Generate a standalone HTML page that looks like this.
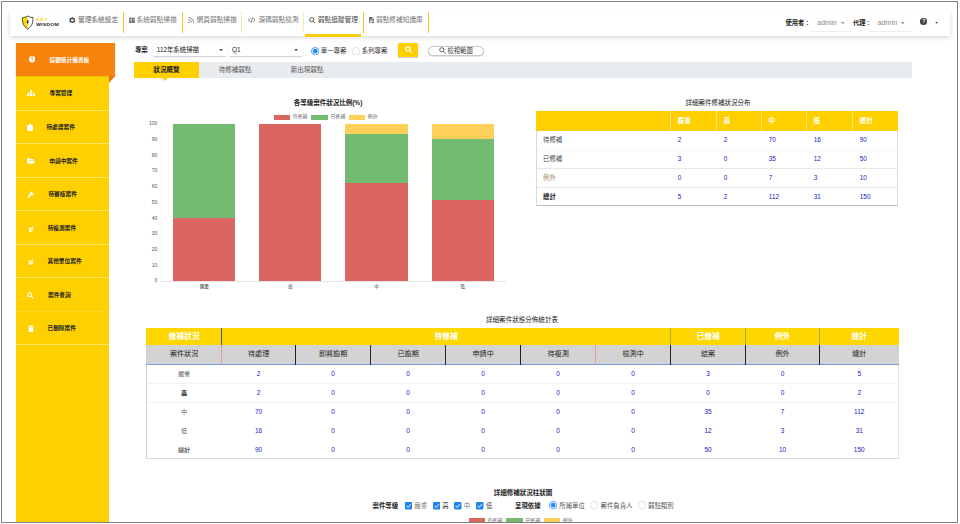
<!DOCTYPE html>
<html lang="zh-Hant">
<head>
<meta charset="utf-8">
<title>弱點追蹤管理</title>
<style>
*{box-sizing:border-box;margin:0;padding:0}
html,body{width:960px;height:524px;overflow:hidden;background:#fff}
body{font-family:"Liberation Sans","Noto Sans CJK TC",sans-serif;color:#222;position:relative}
.a{position:absolute}
.t{position:absolute;white-space:nowrap;line-height:1}
.b{font-weight:bold}
.c{text-align:center}
/* outer frame */
#clip{left:0;top:0;width:958px;height:522.5px;overflow:hidden}
#frame{left:1px;top:1px;width:957px;height:522px;border:1px solid #7f7f7f;pointer-events:none}
/* navbar */
#nav{left:10px;top:9px;width:940px;height:26.800px;background:#fff;box-shadow:0 1.500px 5px rgba(0,0,0,.16)}
.sep{position:absolute;top:3px;width:1px;height:21px;background:#f6c915}
.ni{position:absolute;top:8.200px;font-size:6.700px;line-height:1;color:#777;white-space:nowrap}
.ni svg{position:absolute;top:0}
/* sidebar */
#side{left:16px;top:43px;width:93.2px;height:480px;background:#ffd000}
#sact{left:16px;top:43px;width:99.3px;height:33px;background:#f6830b;box-shadow:0 .5px 1.500px rgba(0,0,0,.2)}
.si{position:absolute;left:0;width:93.2px;height:33.5px;border-top:1px solid rgba(255,255,255,.38)}
.si .t{left:33px;top:14.600px;font-size:5.7px;font-weight:bold;color:#222}
.sel{background:#fff;border-radius:1.500px;box-shadow:0 .5px 1.200px rgba(0,0,0,.2)}
.rad{width:8.200px;height:8.200px;border-radius:50%;border:.6px solid #d2d2d2;background:#fff}
.rad.on{border:.9px solid #2b8dff}
.rad.on::after{content:"";position:absolute;left:.9px;top:.9px;width:4.600px;height:4.600px;border-radius:50%;background:#1a8cff}
</style>
</head>
<body>
<div id="clip" class="a">

<!-- ============ NAVBAR ============ -->
<div id="nav" class="a">
  <!-- logo: shield (coords relative to nav: page x-10, y-9) -->
  <svg class="a" style="left:10.800px;top:5.500px" width="13.400" height="15" viewBox="0 0 26 30">
    <path d="M13 2 C9 4.500 5 5 2.500 5 C2 15 4.500 23 13 28 C21.500 23 24 15 23.500 5 C21 5 17 4.500 13 2 Z" fill="#fff"/>
    <path d="M13 2 C9 4.500 5 5 2.500 5 C2 15 4.500 23 13 28 Z" fill="#ffd900"/>
    <path d="M13 2 C9 4.500 5 5 2.500 5 C2 15 4.500 23 13 28 C21.500 23 24 15 23.500 5 C21 5 17 4.500 13 2 Z" fill="none" stroke="#333" stroke-width="1.700" stroke-linejoin="round"/>
    <rect x="11.400" y="10.500" width="3.200" height="6.500" rx="1.600" fill="#222"/>
  </svg>
  <div class="t b" style="left:26.200px;top:8.800px;font-size:4.200px;letter-spacing:.5px;color:#ffd21a;transform:scaleX(1.2);transform-origin:0 0">KEY</div>
  <div class="t b" style="left:26.200px;top:13.600px;font-size:4.200px;letter-spacing:.2px;color:#222;transform:scaleX(1.22);transform-origin:0 0">WISDOM</div>

  <!-- item 1 -->
  <svg class="a" style="left:58.800px;top:7.700px" width="6.600" height="6.600" viewBox="0 0 16 16"><path fill="#3c3c3c" fill-rule="evenodd" d="M5.73 0.33L10.27 0.33L10.00 2.77L11.53 3.65L13.51 2.20L15.78 6.13L13.53 7.12L13.53 8.88L15.78 9.87L13.51 13.80L11.53 12.35L10.00 13.23L10.27 15.67L5.73 15.67L6.00 13.23L4.47 12.35L2.49 13.80L0.22 9.87L2.47 8.88L2.47 7.12L0.22 6.13L2.49 2.20L4.47 3.65L6.00 2.77ZM8 4.900a3.100 3.100 0 1 0 .01 0z"/></svg>
  <div class="ni" style="left:68px;color:#666">管理系統設定</div>
  <div class="sep" style="left:113px"></div>
  <!-- item 2 -->
  <svg class="a" style="left:119px;top:8px" width="5.800" height="6" viewBox="0 0 12 12"><path fill="#6a6a6a" fill-rule="evenodd" d="M0 2.200L5 0v12H0zM6 1.200h6V12H6zM1.200 4v1.500h2.300V4zM1.200 7v1.500h2.300V7zM7.500 3.300v1.500h1.200V3.300zM9.800 3.300v1.500H11V3.300zM7.500 6.300v1.500h1.200V6.300zM9.800 6.300v1.500H11V6.300z"/></svg>
  <div class="ni" style="left:126.500px">系統弱點掃描</div>
  <div class="sep" style="left:172px"></div>
  <!-- item 3 -->
  <svg class="a" style="left:177.900px;top:8px" width="6.200" height="6.200" viewBox="0 0 12 12" fill="none" stroke="#777" stroke-width="1.700"><circle cx="1.900" cy="10.100" r="1.500" fill="#777" stroke="none"/><path d="M.8 5.200A6 6 0 0 1 6.800 11.200M.8 1A10.200 10.200 0 0 1 11 11.200"/></svg>
  <div class="ni" style="left:186.600px">網頁弱點掃描</div>
  <div class="sep" style="left:231px;background:#fdeaa8"></div>
  <!-- item 4 -->
  <svg class="a" style="left:237.500px;top:8px" width="7.600" height="6" viewBox="0 0 15 12" fill="none" stroke="#5a5a5a" stroke-width="1.500"><path d="M4.500 2.200L1 6L4.500 9.800M10.500 2.200L14 6L10.500 9.800M8.900 .6L6.100 11.400"/></svg>
  <div class="ni" style="left:248.500px">源碼弱點檢測</div>
  <div class="sep" style="left:293px;background:#fdeaa8"></div>
  <!-- item 5 (active) -->
  <svg class="a" style="left:298.900px;top:7.700px" width="6.800" height="6.800" viewBox="0 0 14 14" fill="none" stroke="#3a3a3a" stroke-width="1.700"><circle cx="5.600" cy="5.600" r="4.400"/><path d="M8.900 8.900L13.300 13.300"/></svg>
  <div class="ni" style="left:307.800px;color:#4a4a4a">弱點追蹤管理</div>
  <div class="a" style="left:294.800px;top:25px;width:56.200px;height:2.700px;background:#fccd08"></div>
  <div class="sep" style="left:353px"></div>
  <!-- item 6 -->
  <svg class="a" style="left:359px;top:8px" width="5.200" height="6.200" viewBox="0 0 10 12"><path fill="#6a6a6a" fill-rule="evenodd" d="M0 0h6.500L10 3.500V12H0zM6 1v3h3zM1.500 5.500v1.200h7V5.500zM1.500 7.800V9h7V7.800zM1.500 10v1h5v-1z"/></svg>
  <div class="ni" style="left:366px">弱點修補知識庫</div>
  <div class="sep" style="left:418px"></div>

  <!-- right side -->
  <div class="t b" style="left:775.500px;top:10.500px;font-size:6.300px;color:#222">使用者 :</div>
  <div class="t" style="left:807px;top:10.200px;font-size:7.300px;color:#8a8a8a">admin</div>
  <svg class="a" style="left:830.60px;top:12.55px" width="3.80" height="2.10" viewBox="0 0 10 6"><path d="M0 0H10L5 6z" fill="#8a8a8a"/></svg>
  <div class="a" style="left:800px;top:22px;width:42px;height:.5px;background:#eee"></div>
  <div class="t b" style="left:843px;top:10.500px;font-size:6.300px;color:#222">代理 :</div>
  <div class="t" style="left:867.500px;top:10.200px;font-size:7.300px;color:#8a8a8a">admin</div>
  <svg class="a" style="left:891.30px;top:12.55px" width="3.80" height="2.10" viewBox="0 0 10 6"><path d="M0 0H10L5 6z" fill="#8a8a8a"/></svg>
  <div class="a" style="left:861px;top:22px;width:42px;height:.5px;background:#eee"></div>
  <div class="a" style="left:910.200px;top:9.400px;width:6.600px;height:6.600px;border-radius:50%;background:#444"></div>
  <div class="t b" style="left:912.200px;top:10.300px;font-size:5px;color:#fff">?</div>
  <svg class="a" style="left:924.60px;top:12.95px" width="3.20" height="1.70" viewBox="0 0 10 6"><path d="M0 0H10L5 6z" fill="#444"/></svg>
</div>

<!-- ============ SIDEBAR ============ -->
<div id="side" class="a">
  <!-- items: tops relative to sidebar (page y - 43) -->
  <div class="si" style="top:33.0px;border-top:none">
    <svg class="a" style="left:10.90px;top:13.90px" width="8.00" height="6.00" viewBox="0 0 16 12" fill="#fff"><rect x="6" y="0" width="4" height="4"/><rect x="0" y="7.500" width="4.200" height="4.500"/><rect x="5.900" y="7.500" width="4.200" height="4.500"/><rect x="11.800" y="7.500" width="4.200" height="4.500"/><path d="M1.500 7.500V5.200h13v2.300h-1.300V6.400H8.650v1.100h-1.300V6.400H2.800v1.100z"/><rect x="7.350" y="3.500" width="1.300" height="2.500"/></svg>
    <div class="t" style="left:33.5px">專案管理</div></div>
  <div class="si" style="top:66.5px">
    <svg class="a" style="left:10.90px;top:13.65px" width="6.00" height="6.90" viewBox="0 0 12 14" fill="#fff"><path d="M1.500 1.800h9A1.500 1.500 0 0 1 12 3.300v9.200A1.500 1.500 0 0 1 10.500 14h-9A1.500 1.500 0 0 1 0 12.500V3.300A1.500 1.500 0 0 1 1.500 1.800z"/><rect x="3.500" y="0" width="5" height="3" rx="1"/></svg>
    <div class="t" style="left:30.4px">待處理案件</div></div>
  <div class="si" style="top:100.0px">
    <svg class="a" style="left:10.90px;top:14.05px" width="8.00" height="5.90" viewBox="0 0 17 12" fill="#fff"><path d="M0 1.400A1.400 1.400 0 0 1 1.400 0H5l1.700 1.800h6.100a1.400 1.400 0 0 1 1.400 1.400v1.300H4.400L1.900 10.800H0z"/><path d="M5.100 5.500H17l-2.700 6.500H2.400z"/></svg>
    <div class="t" style="left:33.3px">申請中案件</div></div>
  <div class="si" style="top:133.5px">
    <svg class="a" style="left:11.00px;top:13.40px" width="7.40" height="7.40" viewBox="0 0 14 14" fill="#fff"><path d="M7.200 0.400L13.600 6.800L11.400 9L9.600 7.200L2.300 13.600A1.350 1.350 0 0 1 0.400 11.700L6.800 4.400L5 2.600z"/></svg>
    <div class="t" style="left:32.4px">待審核案件</div></div>
  <div class="si" style="top:167.0px">
    <svg class="a" style="left:11.50px;top:14.50px" width="6.00" height="6.20" viewBox="0 0 12 12" fill="none" stroke="#fff" stroke-width="2.300"><path d="M1.400 3.300L4.600 6.200L10.600 1M1.400 8.100L4.600 11L10.600 5.800"/></svg>
    <div class="t" style="left:31.7px">待複測案件</div></div>
  <div class="si" style="top:200.5px">
    <svg class="a" style="left:11.50px;top:14.50px" width="6.00" height="6.20" viewBox="0 0 12 12" fill="none" stroke="#fff" stroke-width="2.300"><path d="M1.400 3.300L4.600 6.200L10.600 1M1.400 8.100L4.600 11L10.600 5.800"/></svg>
    <div class="t" style="left:31.5px">其他單位案件</div></div>
  <div class="si" style="top:234.0px">
    <svg class="a" style="left:11.40px;top:14.20px" width="6.60" height="6.60" viewBox="0 0 14 14" fill="none" stroke="#fff" stroke-width="2.300"><circle cx="5.600" cy="5.600" r="4.100"/><path d="M8.800 8.800L13 13" stroke-linecap="round"/></svg>
    <div class="t" style="left:32.0px">案件查詢</div></div>
  <div class="si" style="top:267.5px;border-top-color:rgba(255,255,255,.12)">
    <svg class="a" style="left:11.50px;top:13.60px" width="6.00" height="7.00" viewBox="0 0 12 14" fill="#fff"><path d="M0 1.800h3.600L4.300 .3h3.400l.7 1.500H12v1.700H0zM.9 4.500h10.200l-.7 8a1.500 1.500 0 0 1-1.500 1.500H3.100a1.500 1.500 0 0 1-1.500-1.500z"/></svg>
    <div class="t" style="left:31.5px">已刪除案件</div></div>
  <div class="si" style="top:301px"></div>
</div>
<div id="sact" class="a">
  <svg class="a" style="left:12.800px;top:13.300px" width="6.500" height="6.500" viewBox="0 0 16 16"><circle cx="8" cy="8" r="8" fill="#fff"/><path d="M8 8V0M8 8L14 13.500M8 8L2.500 2.500" stroke="#f6830b" stroke-width="1.400" fill="none"/></svg>
  <div class="t b" style="left:33.500px;top:14.900px;font-size:5.700px;color:#fff">綜觀統計儀表板</div>
</div>
<!-- fold triangle -->
<svg class="a" style="left:109.200px;top:76px" width="6.200" height="7" viewBox="0 0 6.200 7"><path d="M0 0H6.200L0 7z" fill="#e47a10"/></svg>

<!--CONTENT-BEGIN-->
<!-- ============ FILTER ROW ============ -->
<div class="t b" style="left:134.900px;top:46.500px;font-size:6.400px;color:#222">專案</div>
<div class="a sel" style="left:153px;top:43.600px;width:73.200px;height:12.800px"></div>
<div class="t" style="left:156.800px;top:46.800px;font-size:6.400px;color:#222">112年系統掃描</div>
<svg class="a" style="left:218.90px;top:48.95px" width="4.20" height="2.30" viewBox="0 0 10 6"><path d="M0 0H10L5 6z" fill="#555"/></svg>
<div class="a sel" style="left:228.800px;top:43.600px;width:72.800px;height:12.800px"></div>
<div class="t" style="left:232px;top:46.800px;font-size:6.400px;color:#222">Q1</div>
<svg class="a" style="left:293.90px;top:48.95px" width="4.20" height="2.30" viewBox="0 0 10 6"><path d="M0 0H10L5 6z" fill="#555"/></svg>
<svg class="a" style="left:310.90px;top:47.00px" width="8.400" height="8.400" viewBox="0 0 8.400 8.400"><circle cx="4.200" cy="4.200" r="3.750" fill="#fff" stroke="#2b8dff" stroke-width=".8"/><circle cx="4.200" cy="4.200" r="2.350" fill="#1a8cff"/></svg>
<div class="t" style="left:320.800px;top:48.300px;font-size:6.400px;color:#333">單一專案</div>
<svg class="a" style="left:351.80px;top:47.00px" width="8.400" height="8.400" viewBox="0 0 8.400 8.400"><circle cx="4.200" cy="4.200" r="3.800" fill="#fff" stroke="#d0d0d0" stroke-width=".6"/></svg>
<div class="t" style="left:361.800px;top:48.300px;font-size:6.400px;color:#333">系列專案</div>
<div class="a" style="left:398px;top:43px;width:20.300px;height:13.500px;background:#ffd000;border-radius:1.500px;box-shadow:0 .8px 1.500px rgba(0,0,0,.22)"></div>
<svg class="a" style="left:404.800px;top:45.800px" width="7.300" height="7.300" viewBox="0 0 13 13" fill="none" stroke="#fff" stroke-width="2.100"><circle cx="5.200" cy="5.200" r="3.800"/><path d="M8.200 8.200L12 12" stroke-linecap="round"/></svg>
<div class="a" style="left:428px;top:46px;width:56px;height:9.700px;border:.6px solid #c8c8c8;border-radius:5px;background:#fff;box-shadow:0 .6px 1px rgba(0,0,0,.2)"></div>
<svg class="a" style="left:439px;top:47.200px" width="7" height="7" viewBox="0 0 12 12" fill="none" stroke="#333" stroke-width="1.300"><circle cx="4.800" cy="4.800" r="3.600"/><path d="M7.500 7.500L11.300 11.300"/></svg>
<div class="t" style="left:447.500px;top:47.700px;font-size:6.300px;color:#333">檢視範圍</div>
<!-- ============ TABS ============ -->
<div class="a" style="left:134px;top:62px;width:777.500px;height:15.700px;background:#e9ecef"></div>
<div class="a" style="left:134px;top:62px;width:65px;height:15.700px;background:#ffd000"></div>
<svg class="a" style="left:161.800px;top:77.700px" width="5.800" height="3" viewBox="0 0 5.800 3"><path d="M0 0H5.800L2.900 3z" fill="#ffd000"/></svg>
<div class="t b c" style="left:134px;width:65px;top:66.500px;font-size:6.600px;color:#222">狀況概覽</div>
<div class="t c" style="left:199px;width:72px;top:66.500px;font-size:6.500px;color:#555">待修補弱點</div>
<div class="t c" style="left:271px;width:72px;top:66.500px;font-size:6.500px;color:#555">新出現弱點</div>
<!-- ============ BAR CHART ============ -->
<div class="t b c" style="left:268px;width:120px;top:99.700px;font-size:6.500px;color:#222">各等級案件狀況比例(%)</div>
<div class="a" style="left:273.80px;top:114.70px;width:16.30px;height:5.30px;background:#db6561"></div>
<div class="t" style="left:292.80px;top:115.30px;font-size:4.90px;color:#666">待修補</div>
<div class="a" style="left:311.30px;top:114.70px;width:16.30px;height:5.30px;background:#73bb70"></div>
<div class="t" style="left:330.60px;top:115.30px;font-size:4.90px;color:#666">已修補</div>
<div class="a" style="left:349.00px;top:114.70px;width:16.30px;height:5.30px;background:#fdd05a"></div>
<div class="t" style="left:367.80px;top:115.30px;font-size:4.90px;color:#666">例外</div>
<div class="a" style="left:161px;top:123.70px;width:1px;height:156.90px;background:#f4f4f4"></div>
<div class="a" style="left:161px;top:281.00px;width:345px;height:1px;background:#e4e4e4"></div>
<div class="t" style="left:143.300px;width:14px;text-align:right;top:278.30px;font-size:5px;color:#555">0</div>
<div class="t" style="left:143.300px;width:14px;text-align:right;top:262.61px;font-size:5px;color:#555">10</div>
<div class="t" style="left:143.300px;width:14px;text-align:right;top:246.92px;font-size:5px;color:#555">20</div>
<div class="t" style="left:143.300px;width:14px;text-align:right;top:231.23px;font-size:5px;color:#555">30</div>
<div class="t" style="left:143.300px;width:14px;text-align:right;top:215.54px;font-size:5px;color:#555">40</div>
<div class="t" style="left:143.300px;width:14px;text-align:right;top:199.85px;font-size:5px;color:#555">50</div>
<div class="t" style="left:143.300px;width:14px;text-align:right;top:184.16px;font-size:5px;color:#555">60</div>
<div class="t" style="left:143.300px;width:14px;text-align:right;top:168.47px;font-size:5px;color:#555">70</div>
<div class="t" style="left:143.300px;width:14px;text-align:right;top:152.78px;font-size:5px;color:#555">80</div>
<div class="t" style="left:143.300px;width:14px;text-align:right;top:137.09px;font-size:5px;color:#555">90</div>
<div class="t" style="left:143.300px;width:14px;text-align:right;top:121.40px;font-size:5px;color:#555">100</div>
<div class="a" style="left:173.30px;top:123.70px;width:62.10px;height:156.90px;background:#73bb70"></div>
<div class="a" style="left:173.30px;top:217.84px;width:62.10px;height:62.76px;background:#db6561"></div>
<div class="t c" style="left:173.30px;width:62.10px;top:285px;font-size:4.700px;color:#333">嚴重</div>
<div class="a" style="left:259.30px;top:123.70px;width:62.20px;height:156.90px;background:#db6561"></div>
<div class="t c" style="left:259.30px;width:62.20px;top:285px;font-size:4.700px;color:#333">高</div>
<div class="a" style="left:345.40px;top:123.70px;width:62.60px;height:156.90px;background:#fdd05a"></div>
<div class="a" style="left:345.40px;top:133.51px;width:62.60px;height:147.09px;background:#73bb70"></div>
<div class="a" style="left:345.40px;top:182.54px;width:62.60px;height:98.06px;background:#db6561"></div>
<div class="t c" style="left:345.40px;width:62.60px;top:285px;font-size:4.700px;color:#333">中</div>
<div class="a" style="left:431.90px;top:123.70px;width:62.10px;height:156.90px;background:#fdd05a"></div>
<div class="a" style="left:431.90px;top:138.88px;width:62.10px;height:141.72px;background:#73bb70"></div>
<div class="a" style="left:431.90px;top:199.62px;width:62.10px;height:80.98px;background:#db6561"></div>
<div class="t c" style="left:431.90px;width:62.10px;top:285px;font-size:4.700px;color:#333">低</div>
<!-- ============ SUMMARY TABLE (right) ============ -->
<div class="t c" style="left:658px;width:120px;top:100px;font-size:6.500px;color:#222">詳細案件修補狀況分布</div>
<div class="a" style="left:536.200px;top:111.200px;width:362.200px;height:95.200px;border:.6px solid #d9d9d9;border-bottom-color:#bdbdbd;background:#fff"></div>
<div class="a" style="left:536.200px;top:111.200px;width:362.200px;height:19.600px;background:#ffd000"></div>
<div class="a" style="left:670.00px;top:111.200px;width:1px;height:19.600px;background:#ffe27a"></div>
<div class="t b" style="left:677.60px;top:117.700px;font-size:6.700px;color:#fff">嚴重</div>
<div class="a" style="left:716.00px;top:111.200px;width:1px;height:19.600px;background:#ffe27a"></div>
<div class="t b" style="left:723.60px;top:117.700px;font-size:6.700px;color:#fff">高</div>
<div class="a" style="left:761.00px;top:111.200px;width:1px;height:19.600px;background:#ffe27a"></div>
<div class="t b" style="left:768.60px;top:117.700px;font-size:6.700px;color:#fff">中</div>
<div class="a" style="left:806.00px;top:111.200px;width:1px;height:19.600px;background:#ffe27a"></div>
<div class="t b" style="left:813.60px;top:117.700px;font-size:6.700px;color:#fff">低</div>
<div class="a" style="left:852.00px;top:111.200px;width:1px;height:19.600px;background:#ffe27a"></div>
<div class="t b" style="left:859.60px;top:117.700px;font-size:6.700px;color:#fff">總計</div>
<div class="t" style="left:543px;top:136.70px;font-size:6.400px;color:#444">待修補</div>
<div class="t" style="left:677.80px;top:136.90px;font-size:6.400px;color:#1616c6">2</div>
<div class="t" style="left:723.80px;top:136.90px;font-size:6.400px;color:#1616c6">2</div>
<div class="t" style="left:768.80px;top:136.90px;font-size:6.400px;color:#1616c6">70</div>
<div class="t" style="left:813.80px;top:136.90px;font-size:6.400px;color:#1616c6">16</div>
<div class="t" style="left:859.80px;top:136.90px;font-size:6.400px;color:#1616c6">90</div>
<div class="t" style="left:543px;top:155.50px;font-size:6.400px;color:#444">已修補</div>
<div class="t" style="left:677.80px;top:155.70px;font-size:6.400px;color:#1616c6">3</div>
<div class="t" style="left:723.80px;top:155.70px;font-size:6.400px;color:#1616c6">0</div>
<div class="t" style="left:768.80px;top:155.70px;font-size:6.400px;color:#1616c6">35</div>
<div class="t" style="left:813.80px;top:155.70px;font-size:6.400px;color:#1616c6">12</div>
<div class="t" style="left:859.80px;top:155.70px;font-size:6.400px;color:#1616c6">50</div>
<div class="t" style="left:543px;top:174.70px;font-size:6.400px;color:#a58d55">例外</div>
<div class="t" style="left:677.80px;top:174.90px;font-size:6.400px;color:#1616c6">0</div>
<div class="t" style="left:723.80px;top:174.90px;font-size:6.400px;color:#1616c6">0</div>
<div class="t" style="left:768.80px;top:174.90px;font-size:6.400px;color:#1616c6">7</div>
<div class="t" style="left:813.80px;top:174.90px;font-size:6.400px;color:#1616c6">3</div>
<div class="t" style="left:859.80px;top:174.90px;font-size:6.400px;color:#1616c6">10</div>
<div class="t" style="left:543px;top:193.50px;font-size:6.400px;color:#111;font-weight:bold">總計</div>
<div class="t" style="left:677.80px;top:193.70px;font-size:6.400px;color:#1616c6">5</div>
<div class="t" style="left:723.80px;top:193.70px;font-size:6.400px;color:#1616c6">2</div>
<div class="t" style="left:768.80px;top:193.70px;font-size:6.400px;color:#1616c6">112</div>
<div class="t" style="left:813.80px;top:193.70px;font-size:6.400px;color:#1616c6">31</div>
<div class="t" style="left:859.80px;top:193.70px;font-size:6.400px;color:#1616c6">150</div>
<div class="a" style="left:537px;top:150px;width:361px;height:1px;background:#f8f8f8"></div>
<div class="a" style="left:537px;top:168px;width:361px;height:1px;background:#e9e9e9"></div>
<div class="a" style="left:537px;top:187px;width:361px;height:1px;background:#e9e9e9"></div>
<!-- ============ DETAIL TABLE (bottom) ============ -->
<div class="t c" style="left:462px;width:120px;top:316.900px;font-size:6.550px;color:#222">詳細案件狀態分佈統計表</div>
<div class="a" style="left:146.00px;top:328px;width:753.00px;height:130.500px;border:.6px solid #d0d0d0;border-right-color:#e6e6e6;border-bottom-color:#dadada;background:#fff"></div>
<div class="a" style="left:146.00px;top:328px;width:753.00px;height:17px;background:#ffd700"></div>
<div class="a" style="left:146.00px;top:345px;width:753.00px;height:19.500px;background:#d3d3d3;border-bottom:.8px solid #6f9fd8"></div>
<div class="t b c" style="left:146.60px;width:75.00px;top:332.800px;font-size:7.800px;color:#fff">修補狀況</div>
<div class="t b c" style="left:221.60px;width:449.00px;top:332.800px;font-size:7.800px;color:#fff">待修補</div>
<div class="t b c" style="left:670.60px;width:75.00px;top:332.800px;font-size:7.800px;color:#fff">已修補</div>
<div class="t b c" style="left:745.60px;width:74.00px;top:332.800px;font-size:7.800px;color:#fff">例外</div>
<div class="t b c" style="left:819.60px;width:79.40px;top:332.800px;font-size:7.800px;color:#fff">總計</div>
<div class="a" style="left:221.00px;top:328px;width:1px;height:17px;background:#2a62b8"></div>
<div class="a" style="left:670.00px;top:328px;width:1px;height:17px;background:#b9a93e"></div>
<div class="a" style="left:745.00px;top:328px;width:1px;height:17px;background:#a9a048"></div>
<div class="a" style="left:819.00px;top:328px;width:1px;height:17px;background:#a9a048"></div>
<div class="t c" style="left:146.60px;width:75.00px;top:350.800px;font-size:7.100px;color:#222">案件狀況</div>
<div class="t c" style="left:221.60px;width:74.00px;top:350.800px;font-size:7.100px;color:#222">待處理</div>
<div class="t c" style="left:295.60px;width:75.00px;top:350.800px;font-size:7.100px;color:#222">即將逾期</div>
<div class="t c" style="left:370.60px;width:75.00px;top:350.800px;font-size:7.100px;color:#222">已逾期</div>
<div class="t c" style="left:445.60px;width:75.00px;top:350.800px;font-size:7.100px;color:#222">申請中</div>
<div class="t c" style="left:520.60px;width:75.00px;top:350.800px;font-size:7.100px;color:#222">待複測</div>
<div class="t c" style="left:595.60px;width:75.00px;top:350.800px;font-size:7.100px;color:#222">檢測中</div>
<div class="t c" style="left:670.60px;width:75.00px;top:350.800px;font-size:7.100px;color:#222">結案</div>
<div class="t c" style="left:745.60px;width:74.00px;top:350.800px;font-size:7.100px;color:#222">例外</div>
<div class="t c" style="left:819.60px;width:79.40px;top:350.800px;font-size:7.100px;color:#222">總計</div>
<div class="a" style="left:221.00px;top:345px;width:1px;height:19.500px;background:#e79aa0"></div>
<div class="a" style="left:295.00px;top:345px;width:1px;height:19.500px;background:#222"></div>
<div class="a" style="left:370.00px;top:345px;width:1px;height:19.500px;background:#3a2020"></div>
<div class="a" style="left:445.00px;top:345px;width:1px;height:19.500px;background:#3a2020"></div>
<div class="a" style="left:520.00px;top:345px;width:1px;height:19.500px;background:#222"></div>
<div class="a" style="left:595.00px;top:345px;width:1px;height:19.500px;background:#e79aa0"></div>
<div class="a" style="left:670.00px;top:345px;width:1px;height:19.500px;background:#222"></div>
<div class="a" style="left:745.00px;top:345px;width:1px;height:19.500px;background:#222"></div>
<div class="a" style="left:819.00px;top:345px;width:1px;height:19.500px;background:#222"></div>
<div class="t c" style="left:146.60px;width:75.00px;top:370.50px;font-size:6.200px;color:#666">嚴重</div>
<div class="t c" style="left:221.60px;width:74.00px;top:370.60px;font-size:6.500px;color:#1616c6">2</div>
<div class="t c" style="left:295.60px;width:75.00px;top:370.60px;font-size:6.500px;color:#1616c6">0</div>
<div class="t c" style="left:370.60px;width:75.00px;top:370.60px;font-size:6.500px;color:#1616c6">0</div>
<div class="t c" style="left:445.60px;width:75.00px;top:370.60px;font-size:6.500px;color:#1616c6">0</div>
<div class="t c" style="left:520.60px;width:75.00px;top:370.60px;font-size:6.500px;color:#1616c6">0</div>
<div class="t c" style="left:595.60px;width:75.00px;top:370.60px;font-size:6.500px;color:#1616c6">0</div>
<div class="t c" style="left:670.60px;width:75.00px;top:370.60px;font-size:6.500px;color:#1616c6">3</div>
<div class="t c" style="left:745.60px;width:74.00px;top:370.60px;font-size:6.500px;color:#1616c6">0</div>
<div class="t c" style="left:819.60px;width:79.40px;top:370.60px;font-size:6.500px;color:#1616c6">5</div>
<div class="t c" style="left:146.60px;width:75.00px;top:389.60px;font-size:6.200px;color:#111;font-weight:bold">高</div>
<div class="t c" style="left:221.60px;width:74.00px;top:389.70px;font-size:6.500px;color:#1616c6">2</div>
<div class="t c" style="left:295.60px;width:75.00px;top:389.70px;font-size:6.500px;color:#1616c6">0</div>
<div class="t c" style="left:370.60px;width:75.00px;top:389.70px;font-size:6.500px;color:#1616c6">0</div>
<div class="t c" style="left:445.60px;width:75.00px;top:389.70px;font-size:6.500px;color:#1616c6">0</div>
<div class="t c" style="left:520.60px;width:75.00px;top:389.70px;font-size:6.500px;color:#1616c6">0</div>
<div class="t c" style="left:595.60px;width:75.00px;top:389.70px;font-size:6.500px;color:#1616c6">0</div>
<div class="t c" style="left:670.60px;width:75.00px;top:389.70px;font-size:6.500px;color:#1616c6">0</div>
<div class="t c" style="left:745.60px;width:74.00px;top:389.70px;font-size:6.500px;color:#1616c6">0</div>
<div class="t c" style="left:819.60px;width:79.40px;top:389.70px;font-size:6.500px;color:#1616c6">2</div>
<div class="t c" style="left:146.60px;width:75.00px;top:409.10px;font-size:6.200px;color:#666">中</div>
<div class="t c" style="left:221.60px;width:74.00px;top:409.20px;font-size:6.500px;color:#1616c6">70</div>
<div class="t c" style="left:295.60px;width:75.00px;top:409.20px;font-size:6.500px;color:#1616c6">0</div>
<div class="t c" style="left:370.60px;width:75.00px;top:409.20px;font-size:6.500px;color:#1616c6">0</div>
<div class="t c" style="left:445.60px;width:75.00px;top:409.20px;font-size:6.500px;color:#1616c6">0</div>
<div class="t c" style="left:520.60px;width:75.00px;top:409.20px;font-size:6.500px;color:#1616c6">0</div>
<div class="t c" style="left:595.60px;width:75.00px;top:409.20px;font-size:6.500px;color:#1616c6">0</div>
<div class="t c" style="left:670.60px;width:75.00px;top:409.20px;font-size:6.500px;color:#1616c6">35</div>
<div class="t c" style="left:745.60px;width:74.00px;top:409.20px;font-size:6.500px;color:#1616c6">7</div>
<div class="t c" style="left:819.60px;width:79.40px;top:409.20px;font-size:6.500px;color:#1616c6">112</div>
<div class="t c" style="left:146.60px;width:75.00px;top:427.80px;font-size:6.200px;color:#666">低</div>
<div class="t c" style="left:221.60px;width:74.00px;top:427.90px;font-size:6.500px;color:#1616c6">16</div>
<div class="t c" style="left:295.60px;width:75.00px;top:427.90px;font-size:6.500px;color:#1616c6">0</div>
<div class="t c" style="left:370.60px;width:75.00px;top:427.90px;font-size:6.500px;color:#1616c6">0</div>
<div class="t c" style="left:445.60px;width:75.00px;top:427.90px;font-size:6.500px;color:#1616c6">0</div>
<div class="t c" style="left:520.60px;width:75.00px;top:427.90px;font-size:6.500px;color:#1616c6">0</div>
<div class="t c" style="left:595.60px;width:75.00px;top:427.90px;font-size:6.500px;color:#1616c6">0</div>
<div class="t c" style="left:670.60px;width:75.00px;top:427.90px;font-size:6.500px;color:#1616c6">12</div>
<div class="t c" style="left:745.60px;width:74.00px;top:427.90px;font-size:6.500px;color:#1616c6">3</div>
<div class="t c" style="left:819.60px;width:79.40px;top:427.90px;font-size:6.500px;color:#1616c6">31</div>
<div class="t c" style="left:146.60px;width:75.00px;top:446.60px;font-size:6.200px;color:#1a1a1a">總計</div>
<div class="t c" style="left:221.60px;width:74.00px;top:446.70px;font-size:6.500px;color:#1616c6">90</div>
<div class="t c" style="left:295.60px;width:75.00px;top:446.70px;font-size:6.500px;color:#1616c6">0</div>
<div class="t c" style="left:370.60px;width:75.00px;top:446.70px;font-size:6.500px;color:#1616c6">0</div>
<div class="t c" style="left:445.60px;width:75.00px;top:446.70px;font-size:6.500px;color:#1616c6">0</div>
<div class="t c" style="left:520.60px;width:75.00px;top:446.70px;font-size:6.500px;color:#1616c6">0</div>
<div class="t c" style="left:595.60px;width:75.00px;top:446.70px;font-size:6.500px;color:#1616c6">0</div>
<div class="t c" style="left:670.60px;width:75.00px;top:446.70px;font-size:6.500px;color:#1616c6">50</div>
<div class="t c" style="left:745.60px;width:74.00px;top:446.70px;font-size:6.500px;color:#1616c6">10</div>
<div class="t c" style="left:819.60px;width:79.40px;top:446.70px;font-size:6.500px;color:#1616c6">150</div>
<div class="a" style="left:147.00px;top:383.20px;width:751.00px;height:.6px;background:#f0f0f0"></div>
<div class="a" style="left:147.00px;top:402.00px;width:751.00px;height:.6px;background:#f0f0f0"></div>
<!-- ============ BOTTOM CHART CONTROLS ============ -->
<div class="t b c" style="left:463px;width:120px;top:489.700px;font-size:6.500px;color:#222">詳細修補狀況柱狀圖</div>
<div class="t b" style="left:372.500px;top:502.500px;font-size:6.400px;color:#222">案件等級</div>
<svg class="a" style="left:404.50px;top:502px" width="7.500" height="7.500" viewBox="0 0 15 15"><rect width="15" height="15" rx="2.200" fill="#1e86f2"/><path d="M3.300 7.800L6.300 10.800L11.800 4.500" fill="none" stroke="#fff" stroke-width="2"/></svg>
<div class="t" style="left:414.30px;top:502.600px;font-size:6.400px;color:#777">嚴重</div>
<svg class="a" style="left:432.50px;top:502px" width="7.500" height="7.500" viewBox="0 0 15 15"><rect width="15" height="15" rx="2.200" fill="#1e86f2"/><path d="M3.300 7.800L6.300 10.800L11.800 4.500" fill="none" stroke="#fff" stroke-width="2"/></svg>
<div class="t" style="left:442.30px;top:502.600px;font-size:6.400px;color:#222">高</div>
<svg class="a" style="left:454.00px;top:502px" width="7.500" height="7.500" viewBox="0 0 15 15"><rect width="15" height="15" rx="2.200" fill="#1e86f2"/><path d="M3.300 7.800L6.300 10.800L11.800 4.500" fill="none" stroke="#fff" stroke-width="2"/></svg>
<div class="t" style="left:463.80px;top:502.600px;font-size:6.400px;color:#777">中</div>
<svg class="a" style="left:476.30px;top:502px" width="7.500" height="7.500" viewBox="0 0 15 15"><rect width="15" height="15" rx="2.200" fill="#1e86f2"/><path d="M3.300 7.800L6.300 10.800L11.800 4.500" fill="none" stroke="#fff" stroke-width="2"/></svg>
<div class="t" style="left:486.10px;top:502.600px;font-size:6.400px;color:#444">低</div>
<div class="t b" style="left:515px;top:502.500px;font-size:6.400px;color:#222">呈現依據</div>
<svg class="a" style="left:549.00px;top:501.20px" width="8.400" height="8.400" viewBox="0 0 8.400 8.400"><circle cx="4.200" cy="4.200" r="3.750" fill="#fff" stroke="#2b8dff" stroke-width=".8"/><circle cx="4.200" cy="4.200" r="2.350" fill="#1a8cff"/></svg>
<div class="t" style="left:559.300px;top:502.600px;font-size:6.400px;color:#555">所屬單位</div>
<svg class="a" style="left:589.90px;top:501.30px" width="8.400" height="8.400" viewBox="0 0 8.400 8.400"><circle cx="4.200" cy="4.200" r="3.800" fill="#fff" stroke="#d0d0d0" stroke-width=".6"/></svg>
<div class="t" style="left:600.500px;top:502.600px;font-size:6.400px;color:#555">案件負責人</div>
<svg class="a" style="left:637.70px;top:501.30px" width="8.400" height="8.400" viewBox="0 0 8.400 8.400"><circle cx="4.200" cy="4.200" r="3.800" fill="#fff" stroke="#d0d0d0" stroke-width=".6"/></svg>
<div class="t" style="left:648px;top:502.600px;font-size:6.400px;color:#555">弱點類別</div>
<div class="a" style="left:468.80px;top:518.00px;width:16.30px;height:5.30px;background:#db6561"></div>
<div class="t" style="left:487.60px;top:518.60px;font-size:4.90px;color:#666">待修補</div>
<div class="a" style="left:506.30px;top:518.00px;width:16.30px;height:5.30px;background:#73bb70"></div>
<div class="t" style="left:525.40px;top:518.60px;font-size:4.90px;color:#666">已修補</div>
<div class="a" style="left:544.20px;top:518.00px;width:16.30px;height:5.30px;background:#fdd05a"></div>
<div class="t" style="left:562.80px;top:518.60px;font-size:4.90px;color:#666">例外</div>
<!--CONTENT-END-->
</div>
<div id="frame" class="a"></div>
</body>
</html>
